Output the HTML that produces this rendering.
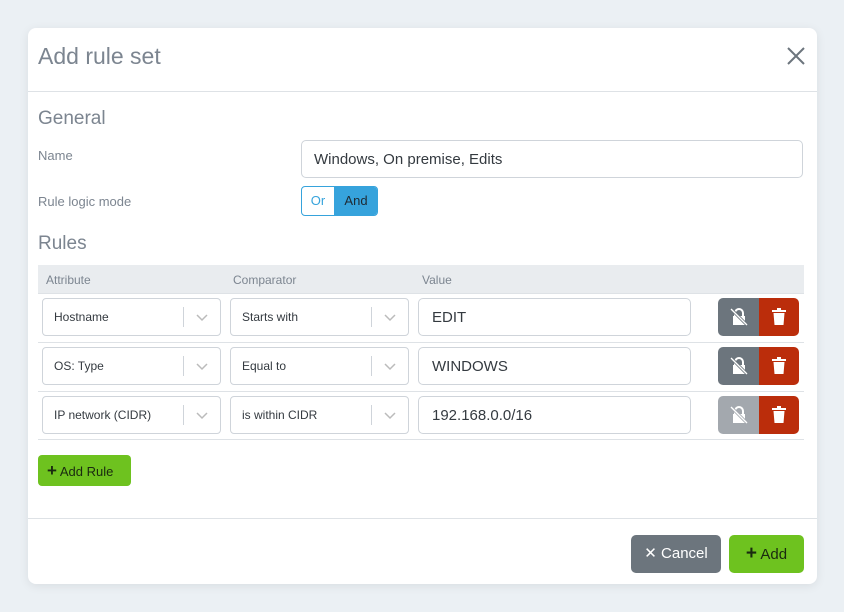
<!DOCTYPE html><html><head><style>
body{margin:0;width:844px;height:612px;background:#ebf0f4;font-family:"Liberation Sans",sans-serif;position:relative;overflow:hidden}
.m{position:absolute;left:28px;top:28px;width:789px;height:556px;background:#fff;border-radius:8px;box-shadow:0 2px 10px rgba(0,0,0,.08)}
.a{position:absolute}
.t{color:#7c8590}
.inp{position:absolute;border:1px solid #cfd4da;border-radius:5px;box-sizing:border-box;background:#fff;color:#343a40}
.sel{position:absolute;height:38px;width:179px;border:1px solid #cfd4da;border-radius:4px;box-sizing:border-box;font-size:12px;color:#343a40}
.sel span{position:absolute;left:11px;top:11px}
.sel i{position:absolute;right:36px;top:8px;width:1px;height:20px;background:#cfd4da}
.sel svg{position:absolute;right:12px;top:15px}
.line{position:absolute;left:38px;width:766px;height:1px;background:#dee2e6}
.b1,.b2{position:absolute;width:41px;height:38px;top:0}
.b1{left:0;background:#6c757d;border-radius:5px 0 0 5px}
.b2{left:41px;width:40px;background:#bb2d0b;border-radius:0 5px 5px 0}
</style></head><body>
<div class="m">
<div class="a t" style="left:10px;top:15px;font-size:23px">Add rule set</div>
<svg class="a" style="left:759px;top:19px" width="18" height="18"><path d="M1 1L17 17M17 1L1 17" stroke="#6c757d" stroke-width="2"/></svg>
<div class="a" style="left:0;top:63px;width:789px;height:1px;background:#dee2e6"></div>
<div class="a t" style="left:10px;top:80px;font-size:19px">General</div>
<div class="a t" style="left:10px;top:120px;font-size:13px">Name</div>
<div class="inp" style="left:273px;top:112px;width:502px;height:38px;font-size:15px;padding:10px 12px">Windows, On premise, Edits</div>
<div class="a t" style="left:10px;top:166px;font-size:13px">Rule logic mode</div>
<div class="a" style="left:273px;top:158px;width:77px;height:30px;border:1px solid #36a3dc;border-radius:4px;box-sizing:border-box;overflow:hidden;font-size:13px">
<div class="a" style="left:0;top:0;width:32px;height:28px;color:#36a3dc;text-align:center;line-height:28px">Or</div>
<div class="a" style="left:32px;top:0;width:44px;height:28px;background:#36a3dc;color:#1e2a33;text-align:center;line-height:28px">And</div></div>
<div class="a t" style="left:10px;top:205px;font-size:19px">Rules</div>
</div>
<div class="a" style="left:38px;top:265px;width:766px;height:28px;background:#e9ecef;border-bottom:1px solid #dee2e6;font-size:12px;color:#7c8590">
<span class="a" style="left:8px;top:8px">Attribute</span><span class="a" style="left:195px;top:8px">Comparator</span><span class="a" style="left:384px;top:8px">Value</span></div>

<div class="sel" style="left:42px;top:298px"><span>Hostname</span><i></i><svg width="12" height="8"><path d="M1 1l5 5 5-5" stroke="#bbb" fill="none" stroke-width="1.5"/></svg></div>
<div class="sel" style="left:230px;top:298px"><span>Starts with</span><i></i><svg width="12" height="8"><path d="M1 1l5 5 5-5" stroke="#bbb" fill="none" stroke-width="1.5"/></svg></div>
<div class="inp" style="left:418px;top:298px;width:273px;height:38px;font-size:15px;padding:10px 13px">EDIT</div>
<div class="line" style="top:342px"></div>
<div class="sel" style="left:42px;top:347px"><span>OS: Type</span><i></i><svg width="12" height="8"><path d="M1 1l5 5 5-5" stroke="#bbb" fill="none" stroke-width="1.5"/></svg></div>
<div class="sel" style="left:230px;top:347px"><span>Equal to</span><i></i><svg width="12" height="8"><path d="M1 1l5 5 5-5" stroke="#bbb" fill="none" stroke-width="1.5"/></svg></div>
<div class="inp" style="left:418px;top:347px;width:273px;height:38px;font-size:15px;padding:10px 13px">WINDOWS</div>
<div class="line" style="top:391px"></div>
<div class="sel" style="left:42px;top:396px"><span>IP network (CIDR)</span><i></i><svg width="12" height="8"><path d="M1 1l5 5 5-5" stroke="#bbb" fill="none" stroke-width="1.5"/></svg></div>
<div class="sel" style="left:230px;top:396px"><span>is within CIDR</span><i></i><svg width="12" height="8"><path d="M1 1l5 5 5-5" stroke="#bbb" fill="none" stroke-width="1.5"/></svg></div>
<div class="inp" style="left:418px;top:396px;width:273px;height:38px;font-size:15px;padding:10px 13px">192.168.0.0/16</div>
<div class="line" style="top:439px"></div>

<div class="a" style="left:718px;top:298px"><div class="b1"><svg style="margin:10px 12px" width="18" height="18"><path d="M5 8V5a4 4 0 0 1 8 0v3" stroke="#fff" stroke-width="2" fill="none"/><rect x="3" y="8" width="12" height="9" fill="#fff"/><path d="M1 1L17 17" stroke="#6c757d" stroke-width="3"/><path d="M1 1L17 17" stroke="#fff" stroke-width="1.3"/></svg></div><div class="b2"><svg style="margin:10px 13px" width="14" height="17"><rect x="0" y="2" width="14" height="2" fill="#fff"/><rect x="5" y="0" width="4" height="2" fill="#fff"/><path d="M1.5 5h11l-1 12h-9z" fill="#fff"/></svg></div></div>
<div class="a" style="left:718px;top:347px"><div class="b1"><svg style="margin:10px 12px" width="18" height="18"><path d="M5 8V5a4 4 0 0 1 8 0v3" stroke="#fff" stroke-width="2" fill="none"/><rect x="3" y="8" width="12" height="9" fill="#fff"/><path d="M1 1L17 17" stroke="#6c757d" stroke-width="3"/><path d="M1 1L17 17" stroke="#fff" stroke-width="1.3"/></svg></div><div class="b2"><svg style="margin:10px 13px" width="14" height="17"><rect x="0" y="2" width="14" height="2" fill="#fff"/><rect x="5" y="0" width="4" height="2" fill="#fff"/><path d="M1.5 5h11l-1 12h-9z" fill="#fff"/></svg></div></div>
<div class="a" style="left:718px;top:396px"><div class="b1" style="background:#a3a8ae"><svg style="margin:10px 12px" width="18" height="18"><path d="M5 8V5a4 4 0 0 1 8 0v3" stroke="#fff" stroke-width="2" fill="none"/><rect x="3" y="8" width="12" height="9" fill="#fff"/><path d="M1 1L17 17" stroke="#a3a8ae" stroke-width="3"/><path d="M1 1L17 17" stroke="#fff" stroke-width="1.3"/></svg></div><div class="b2"><svg style="margin:10px 13px" width="14" height="17"><rect x="0" y="2" width="14" height="2" fill="#fff"/><rect x="5" y="0" width="4" height="2" fill="#fff"/><path d="M1.5 5h11l-1 12h-9z" fill="#fff"/></svg></div></div>

<div class="a" style="left:38px;top:455px;width:93px;height:31px;background:#6ec21f;border-radius:4px;font-size:13px;color:#1a2a10;line-height:31px"><span style="margin-left:9px;font-size:17px;font-weight:bold">+</span> Add Rule</div>
<div class="a" style="left:28px;top:518px;width:789px;height:1px;background:#dee2e6"></div>
<div class="a" style="left:631px;top:535px;width:90px;height:38px;background:#6c757d;border-radius:5px;color:#fff;font-size:15px;line-height:38px;text-align:center">✕ Cancel</div>
<div class="a" style="left:729px;top:535px;width:75px;height:38px;background:#6ec21f;border-radius:5px;color:#1a2a10;font-size:15px;line-height:38px;text-align:center"><b style="font-size:19px">+</b> Add</div>
</body></html>
